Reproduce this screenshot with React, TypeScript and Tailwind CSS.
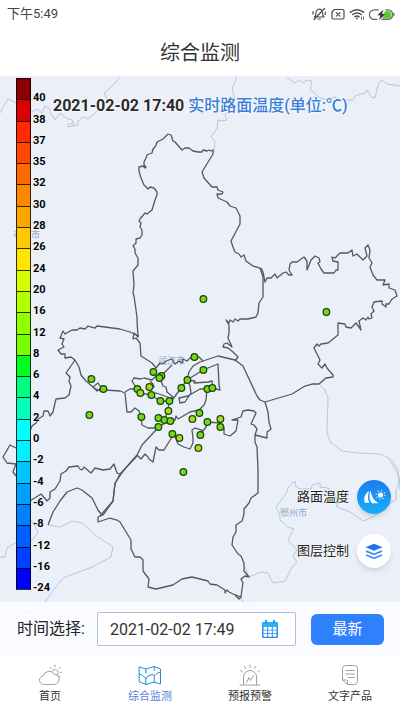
import { useState } from "react"

const LEGEND = [
    { label: "40", color: "#8b0000" },
    { label: "38", color: "#d80000" },
    { label: "37", color: "#ff2a00" },
    { label: "35", color: "#ff4800" },
    { label: "32", color: "#ff6a00" },
    { label: "30", color: "#ff8800" },
    { label: "28", color: "#ffa500" },
    { label: "26", color: "#ffc800" },
    { label: "24", color: "#ffe600" },
    { label: "20", color: "#d4ff00" },
    { label: "16", color: "#b4ff00" },
    { label: "12", color: "#90ff00" },
    { label: "8", color: "#78ff00" },
    { label: "6", color: "#00ff20" },
    { label: "4", color: "#00ff80" },
    { label: "2", color: "#00ffb8" },
    { label: "0", color: "#00ffff" },
    { label: "-2", color: "#00f0ff" },
    { label: "-4", color: "#00c4ff" },
    { label: "-6", color: "#00a0ff" },
    { label: "-8", color: "#0080ff" },
    { label: "-12", color: "#0060ff" },
    { label: "-16", color: "#0040ff" },
    { label: "-24", color: "#0000ff" },
]

const GREEN = "#6fdc14"
const LIME = "#a8dc1e"

const STATIONS: [number, number, string][] = [
    [203, 299, GREEN], [326, 312, GREEN], [91, 379, GREEN], [103, 389, GREEN], [89, 415, GREEN],
    [194, 357, GREEN], [203, 370, GREEN], [187, 380, GREEN], [181, 388, GREEN], [207, 389, GREEN],
    [212, 388, GREEN], [153, 372, GREEN], [161, 376, GREEN], [159, 378, GREEN], [149, 387, LIME],
    [137, 389, GREEN], [140, 393, LIME], [151, 395, GREEN], [160, 401, GREEN], [169, 401, GREEN],
    [168, 411, LIME], [141, 417, GREEN], [158, 418, GREEN], [164, 420, GREEN], [170, 421, GREEN],
    [158, 427, GREEN], [172, 434, GREEN], [179, 438, LIME], [199, 413, GREEN], [192, 419, LIME],
    [207, 422, GREEN], [220, 419, LIME], [220, 427, GREEN], [200, 435, GREEN], [198, 448, LIME],
    [183, 472, GREEN],
]

// district borders
const BORDERS = [
    // north
    "168,134 166,136 163,139 161,140 157,142 156,145 155,147 153,149 152,153 149,154 147,155 146,158 144,162 144,165 146,167 145,168 143,166 139,167 139,171 141,178 144,185 148,189 150,187 154,188 157,192 157,195 155,200 152,210 147,214 145,213 140,219 139,221 141,223 140,227 142,230 142,235 140,238 136,239 136,243 133,246 135,249 135,253 138,258 138,265 133,271 134,285 133,293 134,296 137,317 137,320 138,337 134,333 133,339 136,338 140,343 141,356 152,363 156,368 160,363 163,364 166,361 172,359 175,364 179,361 182,363 183,359 187,361 190,358 194,357 199,357 203,361",
    "168,134 171,135 173,141 175,142 182,150 185,148 189,148 193,151 198,152 202,152 203,150 207,151 209,150 211,151 213,150 213,154 202,172 204,178 212,187 217,187 218,190 223,192 222,194 217,194 218,198 227,202 230,206 236,208 240,216 240,224 231,241 233,247 235,252 239,254 241,257 244,255 246,261 253,266 260,268 263,277 263,297 259,303 258,313 256,317 248,319 240,319 238,321 235,319 233,322 230,320 229,323 226,320 229,325 229,333 228,338 232,347 227,343 224,344 223,347 228,348 233,352 238,357 235,361",
    // east
    "261,268 263,272 265,282 267,278 271,278 275,274 277,278 283,273 286,272 289,275 292,275 289,270 290,264 292,262 297,262 304,257 307,261 307,270 311,260 315,256 319,258 320,262 318,263 321,269 324,273 334,273 336,270 338,270 338,262 333,261 332,257 335,258 340,253 348,253 352,250 353,256 357,254 360,257 363,260 367,256 365,248 368,245 370,250 369,258 372,263 370,267 373,275 377,280 385,280 383,285 389,284 389,288 395,290 397,296 392,299 389,304 386,304 386,307 382,304 382,301 374,302 372,307 374,311 371,314 372,318 369,319 368,317 366,320 363,318 359,321 361,330 356,323 351,328 346,327 345,324 338,323 338,335 328,343 321,344 319,346 317,344 314,348 318,356 320,360 318,364 322,368 325,364 327,368 333,375 333,377 326,378 319,384",
    // river roads
    "181,388 187,380 189,372 193,366 200,362 218,356 235,360 243,366 257,396 260,400 265,402 292,394 305,386 312,384 319,384",
    "265,402 268,412 269,422 271,429 267,432 267,438 255,435 257,429 254,425 251,424 256,413 254,411 248,410 243,411 241,417 232,420 238,420 236,431 230,436 224,434 224,427",
    "255,435 255,442 257,447 258,470 258,493 251,498 249,503 244,509 244,514 242,521 236,525 236,532 233,537 232,545 238,554 241,556 244,563 244,571 249,577 245,576 241,579 243,583 242,589 241,597 233,594 229,592 227,590 225,593 225,590 217,585 210,584 208,581 192,577 182,579 173,585 156,589 148,587 149,579 143,571 143,560 140,557 135,557 131,549 131,540 120,522 117,520 110,518 98,522 98,517 103,515 113,501 115,483 124,470 137,455 142,445 155,431 158,427",
    "137,455 141,459 145,454 148,457 149,459 153,462 156,447 159,450 164,450 172,437 172,434 175,436 178,444 184,447 190,449 193,443 193,438 192,430 195,428 202,430 200,435 206,427 207,422 220,423",
    // west
    "139,336 130,332 120,329 97,326 95,328 88,326 85,329 80,328 77,330 72,330 65,334 63,331 60,338 64,339 62,344 64,347 58,350 61,354 65,354 65,358 71,357 75,360 79,367 81,375 86,381 94,388 103,392 105,390 120,391 125,393 127,412 131,412 135,408 139,411 141,417 142,425 148,428 154,428 158,427",
    "75,360 66,373 70,377 69,381 71,386 69,395 65,398 56,399 55,403 53,412 50,416 48,411 44,411 43,416 38,419 36,423 32,426 30,431",
    "16,448 10,445 3,457 7,463 16,464 13,472 16,476",
    "30,501 33,499 41,494 47,501 50,498 50,492 55,489 60,481 61,474 66,471 69,467 78,466 80,469 82,470 84,467 91,473 95,468 103,470 110,469 114,464 117,473 120,474 115,484 113,501 100,516",
    "48,525 53,512 60,501 67,492 77,488 82,490 92,498 98,510 102,515",
    "120,474 137,456",
    "93,387 98,383 100,386 104,387 97,391 93,387",
    // downtown
    "125,392 130,389 137,389 132,381 134,378 141,379 144,378 152,380 156,376 159,378 172,365",
    "160,378 163,386 166,387 167,392 173,397 169,401 168,411 164,420",
    "137,389 140,393 151,395 160,401 169,401",
    "151,395 156,393 162,395 173,399 181,388",
    "187,380 203,370 218,364 219,385 220,390 212,388",
    "187,380 195,381 194,383 208,382 212,381 213,388",
    "207,389 200,389 188,396 179,398 180,403 185,402 191,393 190,386 188,382",
    "207,389 206,400 204,405 199,410 190,412 178,419 176,416 175,420 170,421 158,427",
    "149,387 154,387 153,384 150,381",
    "241,597 239,599 235,595",
]

// rivers and neighbouring city limits
const OUTLINES = [
    "0,113 3,107 8,99 16,103 32,112 37,109 42,113 45,106 50,109 50,112 55,120 60,113 66,118 72,120 74,124 68,124 68,127 78,125 78,121 83,117 88,119 95,113 104,105 108,101 104,93 109,89 113,85 120,77",
    "236,77 235,82 232,89 235,100 230,110 225,115 227,120 221,121 218,120 217,128 211,137 215,141 214,152",
    "287,78 291,80 295,83 299,80 303,83 307,80 312,81 310,90 315,93 318,97 327,100 335,97 340,100 353,100 355,96 358,95 365,93 367,90 371,97 375,98 377,89 379,83 382,80 387,84 400,86",
    "48,525 60,527 72,521 82,523 95,535 113,547 111,557 92,567 63,578 52,592 43,605 33,612 0,614",
    "0,557 5,557 7,548 15,543 30,542 38,533 33,522 28,519",
    "319,384 325,390 328,398 327,432 330,442 342,451 358,453 380,454 389,458 399,477 400,490",
    "392,460 398,470 399,480 396,492 396,500 391,502 386,508 373,517 363,521 350,512 337,507 336,497 332,492 328,488 320,487 320,483 312,485 311,489 300,489 296,487 295,481 288,488 287,492 283,498 276,507 280,515 280,520 288,527 294,529 288,540 297,550 293,556 297,562 292,567 285,581 273,583 268,573 260,572 256,574 249,577 245,567",
    "240,597 245,605 250,606 253,611 262,609 262,615",
    "298,641 298,656",
]

function AreaMap() {
    return (
        <svg viewBox="0 76 400 580" preserveAspectRatio="xMidYMin slice" className="absolute inset-0 h-full w-full" aria-hidden="true">
            <g fill="#8fabcf" fontSize="9" fontFamily="'Noto Sans CJK SC', sans-serif">
                <text x="13" y="238">孝感市</text>
                <text x="158" y="364">武汉市</text>
                <text x="280" y="516">鄂州市</text>
            </g>
            <g fill="none" stroke="#a9bbd8" strokeWidth="0.8" strokeLinejoin="round">
                {OUTLINES.map((points) => <polyline key={points} points={points} />)}
            </g>
            <g fill="none" stroke="#54585f" strokeWidth="1.3" strokeLinejoin="round">
                {BORDERS.map((points) => <polyline key={points} points={points} />)}
            </g>
            <g stroke="#23430c" strokeWidth="1.3">
                {STATIONS.map(([x, y, color]) => (
                    <circle key={`${x}-${y}`} cx={x + 0.4} cy={y} r="3.3" fill={color} />
                ))}
            </g>
        </svg>
    )
}

function StatusBar() {
    return (
        <div className="flex h-7 items-center justify-between pl-[7px] pr-[5px] text-[13px] text-[#444]">
            <span>下午5:49</span>
            <svg width="84" height="14" viewBox="311 6 84 14" fill="none" stroke="#4a4a4a" strokeWidth="1.2" strokeLinecap="round" strokeLinejoin="round" aria-hidden="true">
                <path d="M314.500 16h9.500c-1.500-1-1.500-2-1.500-4.500M314.500 16c1.500-1 1.500-2 1.500-4.500 0-3 3.500-4.200 5.500-2.500M318 18h2.500M314 18.500 324.500 7.500M313 10.500v2.500M325.300 11v2.500" />
                <path d="M334.500 8.500h8q1.500 0 1.500 1.500v6.500q0 1.500-1.500 1.500h-9q-1.500 0-1.500-1.500V11zM336.300 11.600l3.600 3.600M339.900 11.600l-3.600 3.600" />
                <path d="M350.500 11.200q6.500-5 13 0M352.800 13.500q4.200-3.200 8.400 0M355 15.700q2-1.500 4 0" strokeWidth="1.500" />
                <circle cx="357" cy="17.500" r="0.9" fill="#4a4a4a" stroke="none" />
                <path d="M361.500 16v2.500M363.500 16v2.500" strokeWidth="0.8" />
                <path d="M385.500 10.300h2.300a3.500 3.500 0 0 1 0 7h-5z" fill="#56cc28" stroke="#56cc28" strokeWidth="0.600" />
                <path d="M378.500 8.800h-4.300a4.800 4.800 0 0 0 0 9.600h2.800M386 8.800h2a4.800 4.800 0 0 1 0 9.600h-6" stroke="#666" />
                <path d="M394 12.500v2" stroke="#666" />
                <path d="M383.500 8.500 377.200 14.300h3.200L379 19l6.200-6h-3.200z" fill="#333" stroke="none" />
            </svg>
        </div>
    )
}

function Legend() {
    return (
        <div className="flex h-[512px] flex-col">
            {LEGEND.map((item) => (
                <div key={item.label} className="relative flex flex-1">
                    <div className="w-[15px] border border-b-0 border-black/80" style={{ backgroundColor: item.color }} />
                    <span className="absolute -bottom-[5px] left-[17px] text-[11px] leading-3 font-bold text-black [text-shadow:0_0_2px_#fff]">{item.label}</span>
                </div>
            ))}
            <div className="h-px w-[15px] bg-black/80" />
        </div>
    )
}

function RoadIcon() {
    return (
        <svg viewBox="0 0 34 34" className="size-[34px]" fill="#fff" aria-hidden="true">
            <path d="M12.300 11C8 13.500 6 18.500 8 22.800h4.300C10.300 19 10.800 14.500 12.300 11z" />
            <path d="M13.800 10.800C11.500 15 12.300 20 15 23.300h6.500C17 20.500 14 16 13.800 10.800z" />
            <circle cx="23.500" cy="15" r="2.600" />
            <circle cx="23.500" cy="15" r="4.300" fill="none" stroke="#fff" strokeWidth="1.200" strokeDasharray="1 2.380" />
        </svg>
    )
}

function LayersIcon() {
    return (
        <svg viewBox="0 0 34 34" className="size-[34px]" fill="none" stroke="#3d90f8" strokeWidth="1.800" aria-hidden="true">
            <path d="M17 9.800 25.500 13.300 17 16.800 8.500 13.300z" fill="#1f74ee" stroke="none" />
            <path d="M9 17.200 17 20.400l8-3.200M9 21 17 24.300l8-3.300" />
        </svg>
    )
}

function CalendarIcon() {
    return (
        <svg viewBox="0 0 18 20" className="h-5 w-[18px] shrink-0" aria-hidden="true">
            <path d="M1 4q0-1 1-1h14q1 0 1 1v14q0 1-1 1H2q-1 0-1-1z" fill="#2a8fe8" />
            <path d="M1 4q0-1 1-1h14q1 0 1 1v3H1z" fill="#25b5f2" />
            <path d="M5 1.800v2.500M13 1.800v2.500" stroke="#1b9fe8" strokeWidth="2.200" strokeLinecap="round" />
            <path d="M2.500 7.800h3.700v2.900H2.500zM7.200 7.800h3.600v2.900H7.200zM11.800 7.800h3.700v2.900h-3.700zM2.500 11.600h3.700v2.600H2.500zM7.200 11.600h3.600v2.600H7.200zM11.800 11.600h3.700v2.600h-3.700zM2.500 15.100h3.700v2.600H2.500zM7.200 15.100h3.600v2.600H7.200zM11.800 15.100h3.700v2.600h-3.700z" fill="#fff" />
        </svg>
    )
}

const TABS = [
    {
        label: "首页",
        stroke: "#a0a0a0",
        icon: (
            <>
                <path d="M6 20.500a4.300 4.300 0 0 1-.5-8.600A5.600 5.600 0 0 1 16 10.500a5 5 0 0 1 1 9.900z" />
                <path d="M14 7.500a3.200 3.200 0 1 1 5.200 3.500M17 1v1.800M12 3.500l1.200 1.200M22 3.500l-1.200 1.200M22.300 8.300H24M21 12l1.200 1" />
            </>
        ),
    },
    {
        label: "综合监测",
        stroke: "#1f8fd8",
        icon: (
            <>
                <path d="M1.500 3 8 5l8-2.500L22.500 5v15L16 18l-8 2.500L1.500 18z" />
                <path d="M7.800 5v4M7.800 14.500v6M16.200 2.500v4M16.200 12.500V18M1.500 10l3 1.500 3.500 3 2-2.500 4-1.500 3 1 2.500-2.500 3-1" />
            </>
        ),
    },
    {
        label: "预报预警",
        stroke: "#a0a0a0",
        icon: (
            <>
                <path d="M2 21h20M5.500 21v-8a6.500 6.500 0 0 1 13 0v8M12 1v2.200M6.500 2.500l1 2M17.500 2.500l-1 2M2.500 6.500 4.200 7.700M21.500 6.500l-1.700 1.200" />
                <path d="M8.500 18.500 11 13.500l1.500 3 3-5" />
            </>
        ),
    },
    {
        label: "文字产品",
        stroke: "#a0a0a0",
        icon: (
            <path d="M4.500 16V4.500q0-3 3-3h9q3 0 3 3v13q0 3-3 3H9.500L4.500 16h3.800q1.200 0 1.200 1.300v3.200M8 6.500h8.500M8 10h8.500M10.500 13.500h6" />
        ),
    },
]

export default function App() {
    const [time, setTime] = useState("2021-02-02 17:49")
    const [active, setActive] = useState("综合监测")

    return (
        <div className="flex min-h-screen flex-col bg-white font-[Roboto,'Noto_Sans_CJK_SC',sans-serif] text-[#333]">
            <StatusBar />
            <header className="flex h-12 items-center justify-center pt-0.5">
                <h1 className="text-xl">综合监测</h1>
            </header>

            <main className="relative flex flex-1 flex-col overflow-hidden bg-[#ebeff7]">
                <AreaMap />

                <div className="relative flex items-start pt-0.5 pl-4">
                    <Legend />
                    <h2 className="mt-4 pl-[22px] text-base leading-6 font-bold whitespace-nowrap text-[#2b2b2b] [text-shadow:0_0_3px_#fff,0_0_2px_#fff]">
                        2021-02-02 17:40 <span className="font-medium text-[#3a80d8]">实时路面温度(单位:℃)</span>
                    </h2>
                </div>

                {/* Floating map controls */}
                <div className="absolute right-[9px] bottom-[88px] flex flex-col gap-5 text-[13px] text-[#222]">
                    <button type="button" className="flex items-center gap-2 [text-shadow:0_0_2px_#fff,0_0_2px_#fff]">
                        路面温度
                        <span className="rounded-full bg-linear-to-b from-[#1d7df0] to-[#18aef8] shadow-md"><RoadIcon /></span>
                    </button>
                    <button type="button" className="flex items-center gap-2 [text-shadow:0_0_2px_#fff,0_0_2px_#fff]">
                        图层控制
                        <span className="rounded-full bg-white shadow-md"><LayersIcon /></span>
                    </button>
                </div>

                <form className="relative mt-auto flex h-[54px] items-center bg-[#fbfdff]/85 pr-4 pl-[17px]" onSubmit={(e) => e.preventDefault()}>
                    <label htmlFor="time" className="shrink-0 text-base text-[#222]">时间选择:</label>
                    <div className="ml-3 flex h-[34px] min-w-0 flex-1 items-center rounded-xs border border-[#b3bdd3] bg-white pr-4 pl-3">
                        <input
                            id="time"
                            type="text"
                            value={time}
                            onChange={(e) => setTime(e.target.value)}
                            className="min-w-0 flex-1 pt-0.5 text-base text-[#333] outline-none"
                        />
                        <CalendarIcon />
                    </div>
                    <button type="submit" className="ml-[15px] h-[31px] w-[73px] shrink-0 rounded-md bg-[#2f80fd] text-[15px] text-white">最新</button>
                </form>
            </main>

            <nav className="grid h-[55px] grid-cols-4 bg-white">
                {TABS.map((tab) => (
                    <button key={tab.label} type="button" onClick={() => setActive(tab.label)} className="flex flex-col items-center pt-2">
                        <svg viewBox="0 0 24 22" className="h-[22px] w-6" fill="none" stroke={tab.stroke} strokeWidth="1" strokeLinecap="round" strokeLinejoin="round" aria-hidden="true">
                            {tab.icon}
                        </svg>
                        <span className={`mt-[3px] text-[11px] leading-4 ${active === tab.label ? "text-[#5b7fe0]" : "text-[#333]"}`}>{tab.label}</span>
                    </button>
                ))}
            </nav>
        </div>
    )
}
